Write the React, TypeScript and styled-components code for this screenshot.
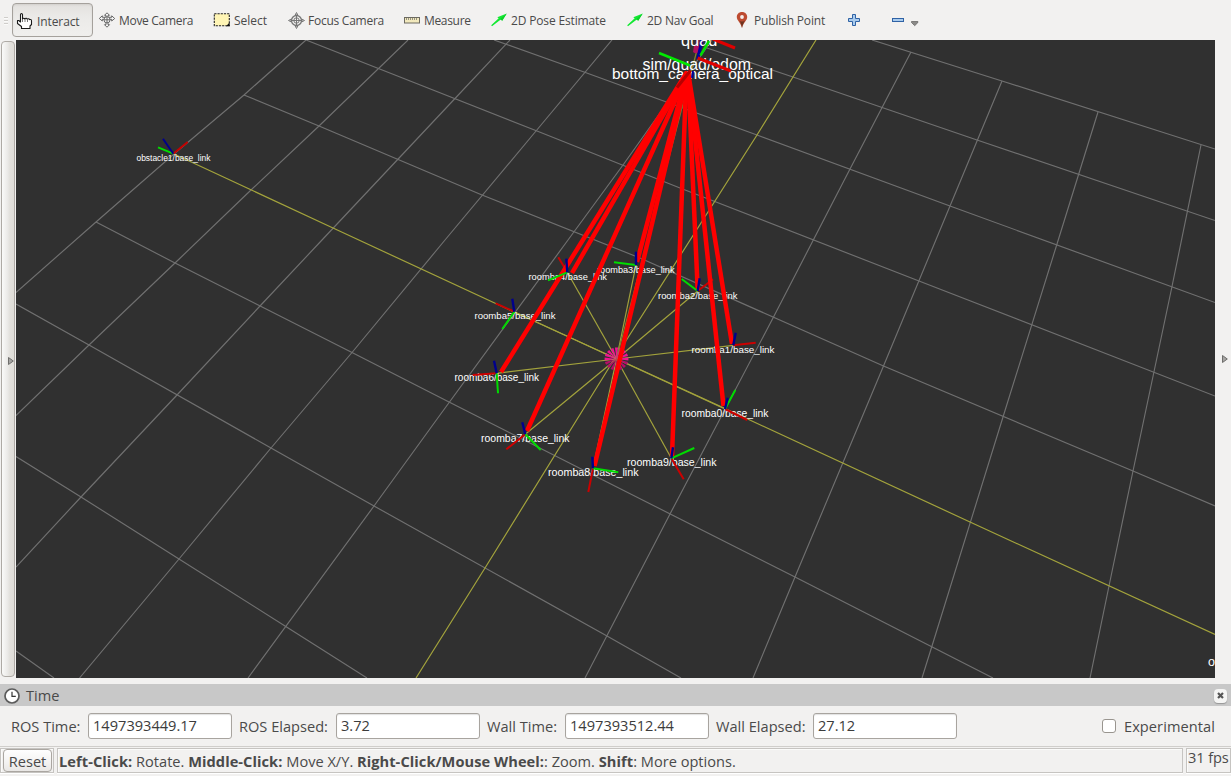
import React from 'react';
import styled, { createGlobalStyle } from 'styled-components';

const UI_FONT = '"Open Sans", "Noto Sans", sans-serif';

const GlobalStyle = createGlobalStyle`
  html, body { margin: 0; padding: 0; background: #f2f1f0; }
  * { box-sizing: border-box; }
`;

const Window = styled.div`
  width: 1231px;
  height: 776px;
  display: flex;
  flex-direction: column;
  overflow: hidden;
  background: #f2f1f0;
  color: #4a4a4a;
  font-family: ${UI_FONT};
  font-size: 14.6px;
  white-space: nowrap;
`;

/* ---------- Toolbar ---------- */

const Toolbar = styled.div`
  height: 40px;
  flex: none;
  display: flex;
  align-items: center;
  font-size: 12px;
`;

const Handle = styled.div`
  width: 4px;
  height: 8px;
  margin: 1px 4px 0;
  background: repeating-linear-gradient(to bottom, #cfcdca 0 1px, #fbfbfa 1px 2px, transparent 2px 3px);
`;

const ActiveTool = styled.button`
  width: 81px;
  height: 34px;
  margin-right: 6px;
  padding: 2px 0 0 3px;
  display: flex;
  align-items: center;
  gap: 4px;
  border: 1px solid #a5a19c;
  border-radius: 4px;
  background: linear-gradient(#e3e1de, #ebeae8 40%, #f0efed);
  box-shadow: inset 0 1px 2px rgba(0, 0, 0, 0.08);
  color: inherit;
  font: inherit;
`;

const Tool = styled.button<{ $width: number }>`
  width: ${(p) => p.$width}px;
  height: 34px;
  flex: none;
  padding: 0;
  display: flex;
  align-items: center;
  gap: 4px;
  border: 0;
  background: none;
  color: inherit;
  font: inherit;
`;

const ToolLabel = styled.span<{ $tracking?: number }>`
  letter-spacing: ${(p) => p.$tracking ?? 0}px;
`;

const Glyph = styled.svg`
  flex: none;
  overflow: visible;
`;

/* ---------- Middle area ---------- */

const Middle = styled.div`
  height: 638px;
  flex: none;
  display: flex;
`;

const LeftStrip = styled.div`
  width: 16px;
  padding: 1px 1px 0 1px;
`;

const CollapseButton = styled.div`
  height: 636px;
  display: flex;
  align-items: center;
  justify-content: flex-end;
  padding: 3px 0 0 0;
  border: 1px solid #aeaaa5;
  border-radius: 4px;
  background: linear-gradient(to right, #fafaf9, #ebeae8 45%, #e2e0dc 65%, #dfddd8);
`;

const RightStrip = styled.div`
  width: 16px;
  display: flex;
  align-items: center;
  justify-content: flex-end;
  padding-right: 3px;
`;

const Scene = styled.svg`
  display: block;
  width: 1199px;
  height: 638px;
  background: #303030;
  font-family: "Liberation Sans", Arial, sans-serif;
`;

/* ---------- Time panel ---------- */

const TitleBar = styled.div`
  height: 22px;
  margin-top: 6px;
  flex: none;
  display: flex;
  align-items: center;
  padding: 1px 4px 0;
  background: #c8c8c8;
`;

const Title = styled.span`
  margin: -2px 0 0 6px;
  flex: 1;
`;

const CloseButton = styled.div`
  width: 13px;
  height: 14px;
  display: flex;
  align-items: center;
  justify-content: center;
  border-radius: 4px;
  background: #f5f5f4;
  box-shadow: 0 1px 1px rgba(0, 0, 0, 0.25);
`;

const TimeRow = styled.div`
  height: 40px;
  flex: none;
  display: flex;
  align-items: center;
  padding-left: 11px;
`;

const FieldLabel = styled.label<{ $width: number }>`
  width: ${(p) => p.$width}px;
  flex: none;
`;

const Field = styled.div`
  width: 144px;
  height: 26px;
  margin-right: 7px;
  flex: none;
  padding-left: 4px;
  line-height: 23px;
  border: 1px solid #a8a49f;
  border-radius: 3px;
  background: #fff;
  box-shadow: inset 0 1px 1px rgba(0, 0, 0, 0.12);
  color: #3c3c3c;
`;

const Checkbox = styled.div`
  width: 14px;
  height: 14px;
  margin: 0 8px 0 auto;
  border: 1px solid #99958f;
  border-radius: 3px;
  background: #fff;
`;

const CheckLabel = styled.span`
  width: 92px;
  margin-right: 15px;
  letter-spacing: 0.06px;
`;

/* ---------- Status bar ---------- */

const StatusBar = styled.div`
  height: 30px;
  flex: none;
  display: flex;
  gap: 3px;
  padding: 1px 0 3px;
  border-top: 1px solid #d0cecb;
`;

const Inset = styled.div<{ $width: number }>`
  width: ${(p) => p.$width}px;
  flex: none;
  display: flex;
  align-items: center;
  border: 1px solid #c6c4c1;
  box-shadow: inset 1px 1px 0 #fbfbfa, 0 1px 0 #fff;
`;

const ResetButton = styled.button`
  width: 49px;
  height: 23px;
  margin: 0 0 0 2px;
  padding: 0;
  border: 1px solid #aaa6a1;
  border-radius: 4px;
  background: linear-gradient(#fefefe, #f3f2f1 60%, #e9e7e5);
  color: #4a4a4a;
  font: 14.6px/20px ${UI_FONT};
`;

const Hint = styled.span`
  margin-left: 1px;

  b { letter-spacing: 0.07px; }
`;

const Fps = styled.span`
  margin: -8px 0 0 1px;
  letter-spacing: -0.1px;
`;

/* ---------- Icons ---------- */

const HandIcon = () => (
  <Glyph width="17" height="18" viewBox="0 0 17 18">
    <path
      d="M4.500 10V2.500Q5.500.5 6.500 2.500V7Q7.500 5.500 8.800 6.800Q10.200 5.600 11.300 7.200Q12.600 6 13.700 7.600Q15.500 7 15.500 9V12.500L14 14V16.500H5.500V14.500L1.500 11.500V8.500H2.800Z"
      fill="#fff" stroke="#1a1a1a" strokeWidth="1.100" strokeLinejoin="round"
    />
    <path d="M6.500 7V10M9 7V10M11.500 7.500V10" stroke="#555" strokeWidth=".8" />
  </Glyph>
);

const MoveIcon = () => (
  <Glyph width="16" height="16" viewBox="0 0 16 16" fill="none" stroke="#606060" strokeWidth=".95">
    <path d="M8 .8L10.500 3.300H9V5.500H7V3.300H5.500ZM8 15.200L10.500 12.700H9V10.500H7V12.700H5.500ZM.3 6.500L3.300 3.800V5.300H6V7.300H3.300V9ZM15.700 6.500L12.700 3.800V5.300H10V7.300H12.700V9Z" fill="#f8f8f8" />
    <circle cx="8" cy="7.800" r="3.100" fill="#f8f8f8" />
    <path d="M5 7.800H11M8 4.800V10.800" />
  </Glyph>
);

const SelectIcon = () => (
  <Glyph width="17" height="14" viewBox="-.5 0 17 14">
    <rect x=".8" y=".8" width="15" height="12" fill="#fff5b5" stroke="#222" strokeWidth="1.100" strokeDasharray="2.200 1" />
    <path d="M16 9.500V13.300H12.500Z" fill="#111" />
  </Glyph>
);

const FocusIcon = () => (
  <Glyph width="16" height="17" viewBox="0 0 16 17" fill="none" stroke="#777" strokeWidth="1">
    <circle cx="8.500" cy="8.500" r="5" strokeWidth="1.300" />
    <circle cx="8.500" cy="8.500" r="2.700" />
    <path d="M.5 8.500L3 7.200V9.800ZM16.500 8.500L14 7.200V9.800ZM8.500 .5L7.200 3H9.800ZM8.500 16.500L7.200 14H9.800Z" />
    <path d="M3 8.500H14M8.500 3V14" />
  </Glyph>
);

const RulerIcon = () => (
  <Glyph width="16" height="7" viewBox="0 0 16 7">
    <rect x=".5" y=".5" width="15" height="5.500" fill="#f2e9bd" stroke="#6c6a60" />
    <path d="M2.500 1V3M4.500 1V3M6.500 1V3M8.500 1V3M10.500 1V3M12.500 1V3" stroke="#8a8878" strokeWidth=".9" />
  </Glyph>
);

const ArrowIcon = () => (
  <Glyph width="16" height="14" viewBox="0 0 16 14">
    <path d="M15.800 .5L11.200 7.800L9.800 6.500L1 13.200L.2 12.200L7.700 5.200L6.300 4.200Z" fill="#12e832" />
    <path d="M15.500 .8L8.500 6.500L9.800 6.500L11.200 7.800Z" fill="#0fcf2a" />
  </Glyph>
);

const PinIcon = () => (
  <Glyph width="16" height="16" viewBox="0 0 16 16">
    <path d="M8 0C4.800 0 2.800 2.200 2.800 5C2.800 8.500 6.700 10.500 8 16C9.300 10.500 13.200 8.500 13.200 5C13.200 2.200 11.200 0 8 0Z" fill="#bd4b30" />
    <path d="M8 9.500C6.500 9.500 6 9 5 8C6.500 10 7.500 12.500 8 16C8.500 12.500 9.800 10 11.500 8C10 9 9.500 9.500 8 9.500Z" fill="#6b3420" />
    <circle cx="8" cy="5" r="1.900" fill="#f7efec" />
  </Glyph>
);

const PlusIcon = () => (
  <Glyph width="12" height="12" viewBox="0 0 12 12">
    <path d="M4.500 .5H7.500V4.500H11.500V7.500H7.500V11.500H4.500V7.500H.5V4.500H4.500Z" fill="#a9cbed" stroke="#2f62a5" />
  </Glyph>
);

const MinusIcon = () => (
  <Glyph width="12" height="4" viewBox="0 0 12 4">
    <rect x=".5" y=".5" width="11" height="3" fill="#a9cbed" stroke="#2f62a5" />
  </Glyph>
);

const DownIcon = () => (
  <Glyph width="8" height="14" viewBox="-3 0 8 14">
    <path d="M.5 8.500H6.900V9.500L3.700 12.700L.5 9.500Z" fill="#8b8a88" stroke="#6c6b69" strokeWidth=".8" />
  </Glyph>
);

const RightTriangle = () => (
  <Glyph width="6" height="8" viewBox="0 0 6 8">
    <path d="M.5 .5L5.300 4L.5 7.500Z" fill="#a5a4a2" stroke="#6f6e6c" />
  </Glyph>
);

const ClockIcon = () => (
  <Glyph width="16" height="16" viewBox="0 0 16 16">
    <circle cx="8" cy="8" r="7" fill="#fff" stroke="#5b5b5b" strokeWidth="1.700" />
    <path d="M8 3.800V8.300H11.800" fill="none" stroke="#333" strokeWidth="1.200" />
  </Glyph>
);

/* ---------- 3D scene ---------- */

type Pt = [number, number];

const gridLines: Pt[][] = [
  [[872, 40], [1002, 81], [1215, 149]],
  [[707, 48], [793, 77], [977, 140], [1215, 220.5]],
  [[494, 40], [584, 72], [757, 135], [950, 206], [1215, 302.5]],
  [[306, 40], [400, 77], [537, 131], [680, 188], [919, 281], [1215, 396]],
  [[244, 95], [319, 126], [482, 195], [640, 258], [883.5, 366], [1133, 471], [1215, 506]],
  [[96, 222], [175, 263], [352, 352.5], [449, 402], [595, 476], [795, 577], [993, 678]],
  [[16, 304], [89, 345], [271, 448], [374, 506], [607, 636], [681, 678]],
  [[16, 456.5], [81, 497], [179, 559], [285, 626], [367, 678]],
  [[16, 651], [54, 678]],
  [[306, 40], [244, 95], [174, 154], [96, 222], [16, 292.5]],
  [[408, 40], [319, 126], [251, 190], [175, 263], [89, 345], [16, 415.5]],
  [[510, 40], [455, 98.5], [322, 240], [260, 306], [177, 395], [81, 497], [16, 567]],
  [[612, 40], [536, 131], [445, 240], [352, 352.5], [271, 448], [179, 559], [79.5, 678]],
  [[712, 40], [623, 165], [568, 240], [440, 415], [374, 506], [248, 678]],
  [[911, 52], [850, 169], [773, 318], [670, 514], [585, 678]],
  [[1002, 81], [950, 206], [883.5, 366], [795, 577], [753, 678]],
  [[1098, 112], [1057, 244], [1003, 417], [932, 646], [922, 678]],
  [[1201, 145], [1172, 286.5], [1133, 471], [1109, 586], [1090, 678]],
];

const originLines: Pt[][] = [
  [[174, 154], [333, 228], [514, 312], [615, 358], [724, 408], [970, 522], [1215, 634.5]],
  [[816, 40], [757, 135], [615, 358], [485, 568], [416, 678]],
];

const CENTER: Pt = [616.5, 359];

interface Frame {
  name: string;
  at: Pt;
  x?: Pt;
  y?: Pt;
  z: Pt;
  label: [number, number, number];
}

// label: left edge, baseline, width
const frames: Frame[] = [
  { name: 'roomba0/base_link', at: [725, 409], x: [747.3, 420], y: [735.3, 390], z: [727.7, 397.7], label: [681.5, 417, 87] },
  { name: 'roomba1/base_link', at: [733.3, 345.3], x: [755.7, 342.7], z: [735.7, 332.7], label: [691.5, 353, 83] },
  { name: 'roomba2/base_link', at: [697.7, 291], x: [713, 279.3], y: [681.7, 279], z: [699.7, 278.3], label: [658, 299, 79.5] },
  { name: 'roomba3/base_link', at: [636, 265], y: [614, 262.3], z: [636, 251.7], label: [597, 272.5, 77.5] },
  { name: 'roomba4/base_link', at: [567.3, 272.3], x: [558.3, 257.3], y: [548, 280.3], z: [566.3, 258.7], label: [528.5, 279.7, 78.5] },
  { name: 'roomba5/base_link', at: [514.3, 311.7], x: [495.7, 303.3], y: [502.3, 329], z: [512.3, 298.7], label: [474.5, 319.3, 81] },
  { name: 'roomba6/base_link', at: [496.7, 373.3], x: [472.7, 375], y: [498, 393.3], z: [494, 360.7], label: [454.5, 380.5, 84.5] },
  { name: 'roomba7/base_link', at: [525.3, 434.3], x: [506.3, 449.3], y: [540.7, 450], z: [522.3, 422.3], label: [481, 441.5, 88.5] },
  { name: 'roomba8/base_link', at: [593, 468.3], x: [588.3, 492], y: [618.3, 472.3], z: [592.3, 456.7], label: [548, 476, 90.5] },
  { name: 'roomba9/base_link', at: [671.3, 458.3], x: [683.7, 479.3], y: [694.3, 448], z: [673, 447.3], label: [627, 466, 89.5] },
];

const rays: [number, number, number, number][] = [
  [687, 72, 501, 372], [688, 72, 572, 273], [688, 72, 527, 431], [687, 72, 637, 262], [688, 72, 594.5, 466],
  [686.5, 72, 672, 456], [688, 72, 697.7, 290], [688, 72, 723.5, 406], [688, 72, 732, 344],
];

const starAngles = Array.from({ length: 16 }, (_, i) => (i * Math.PI) / 8);

const Line = ({ a, b, color, width = 2 }: { a: Pt; b: Pt; color: string; width?: number }) => (
  <line x1={a[0]} y1={a[1]} x2={b[0]} y2={b[1]} stroke={color} strokeWidth={width} />
);

const SceneLabel = ({ x, y, w, size, children }: { x: number; y: number; w: number; size: number; children: string }) => (
  <text x={x} y={y} textLength={w} fontSize={size} fill="#fff" lengthAdjust="spacingAndGlyphs">{children}</text>
);

const points = (p: Pt[]) => p.map((q) => q.join(',')).join(' ');

const Viewport = () => (
  <Scene viewBox="16 40 1199 638">
    <g fill="none" stroke="#707070" strokeWidth="1.15">
      {gridLines.map((l, i) => <polyline key={i} points={points(l)} />)}
    </g>
    <g fill="none" stroke="#a3a33c" strokeWidth="1.2">
      {originLines.map((l, i) => <polyline key={i} points={points(l)} />)}
      {frames.map((f) => <line key={f.name} x1={CENTER[0]} y1={CENTER[1]} x2={f.at[0]} y2={f.at[1]} />)}
      <line x1={CENTER[0]} y1={CENTER[1]} x2="697" y2="50" stroke="#82822f" />
    </g>
    {starAngles.map((t) => (
      <path
        key={t}
        d={`M${CENTER[0]} ${CENTER[1]}L${CENTER[0] + 12 * Math.cos(t - 0.13)} ${CENTER[1] + 11.5 * Math.sin(t - 0.13)}L${CENTER[0] + 12 * Math.cos(t + 0.13)} ${CENTER[1] + 11.5 * Math.sin(t + 0.13)}Z`}
        fill={Math.sin(t) > 0.2 ? '#b50d68' : '#ee1590'}
      />
    ))}

    <path d="M694 46H699.5L699 52Q696 54.5 693 52Z" fill="#b3125f" />
    <path d="M696 40H700L699 47H695Z" fill="#b3125f" opacity=".5" />
    <Line a={[702, 40]} b={[697.7, 59]} color="#0000a0" width={3} />

    <SceneLabel x={681} y={46.2} w={36.5} size={16.2}>quad</SceneLabel>
    <SceneLabel x={642.5} y={69.7} w={108.5} size={15.8}>sim/quad/odom</SceneLabel>
    <SceneLabel x={612} y={79} w={161} size={15.4}>bottom_camera_optical</SceneLabel>
    <SceneLabel x={136.5} y={160.5} w={74} size={8.4}>obstacle1/base_link</SceneLabel>
    <SceneLabel x={1208} y={665.5} w={7} size={12}>o</SceneLabel>
    {frames.map((f) => (
      <SceneLabel key={f.name} x={f.label[0]} y={f.label[1]} w={f.label[2]} size={f.label[2] / 8.45}>{f.name}</SceneLabel>
    ))}

    <Line a={[709, 41]} b={[700.5, 55.5]} color="#00e000" width={2.5} />
    <Line a={[659, 53]} b={[690, 65.5]} color="#00e800" width={2.5} />
    <Line a={[713, 39]} b={[735, 48]} color="#e00000" width={3} />
    <Line a={[697.7, 58]} b={[731, 71]} color="#e00000" width={3} />
    <Line a={[693, 71]} b={[692, 78]} color="#0000a0" width={2} />

    {frames.map((f) => f.x && <Line key={f.name} a={f.at} b={f.x} color="#cc0000" width={2} />)}
    {rays.map((r, i) => (
      <line key={i} x1={r[0]} y1={r[1]} x2={r[2]} y2={r[3]} stroke="#f00" strokeWidth="4.5" />
    ))}
    <Line a={[690.5, 70.5]} b={[677, 87.5]} color="#b80000" width={3} />
    {frames.map((f) => (
      <g key={f.name}>
        {f.y && <Line a={f.at} b={f.y} color="#00dc00" width={2} />}
        <Line a={f.at} b={f.z} color="#00008c" width={2.4} />
      </g>
    ))}
    <Line a={[173.3, 153.7]} b={[187.7, 142]} color="#c40000" width={2} />
    <Line a={[173.3, 153.7]} b={[158, 147.3]} color="#00dc00" width={1.8} />
    <Line a={[173.3, 153.7]} b={[163, 138.7]} color="#00008c" width={2} />
  </Scene>
);

export default function App() {
  return (
    <Window>
      <GlobalStyle />
      <Toolbar>
        <Handle />
        <ActiveTool><HandIcon /><ToolLabel $tracking={-0.1}>Interact</ToolLabel></ActiveTool>
        <Tool $width={114}><MoveIcon /><ToolLabel $tracking={-0.3}>Move Camera</ToolLabel></Tool>
        <Tool $width={75}><SelectIcon /><ToolLabel>Select</ToolLabel></Tool>
        <Tool $width={116}><FocusIcon /><ToolLabel $tracking={-0.25}>Focus Camera</ToolLabel></Tool>
        <Tool $width={87}><RulerIcon /><ToolLabel $tracking={-0.33}>Measure</ToolLabel></Tool>
        <Tool $width={136}><ArrowIcon /><ToolLabel $tracking={-0.15}>2D Pose Estimate</ToolLabel></Tool>
        <Tool $width={107}><ArrowIcon /><ToolLabel $tracking={-0.25}>2D Nav Goal</ToolLabel></Tool>
        <Tool $width={114}><PinIcon /><ToolLabel $tracking={-0.17}>Publish Point</ToolLabel></Tool>
        <Tool $width={44}><PlusIcon /></Tool>
        <Tool $width={30}><MinusIcon /><DownIcon /></Tool>
      </Toolbar>

      <Middle>
        <LeftStrip><CollapseButton><RightTriangle /></CollapseButton></LeftStrip>
        <Viewport />
        <RightStrip><RightTriangle /></RightStrip>
      </Middle>

      <TitleBar>
        <ClockIcon />
        <Title>Time</Title>
        <CloseButton>
          <Glyph width="7" height="7" viewBox="0 0 7 7"><path d="M1 1L6 6M6 1L1 6" stroke="#555" strokeWidth="2.200" /></Glyph>
        </CloseButton>
      </TitleBar>
      <TimeRow>
        <FieldLabel $width={77}>ROS Time:</FieldLabel><Field>1497393449.17</Field>
        <FieldLabel $width={97}>ROS Elapsed:</FieldLabel><Field>3.72</Field>
        <FieldLabel $width={78}>Wall Time:</FieldLabel><Field>1497393512.44</Field>
        <FieldLabel $width={97}>Wall Elapsed:</FieldLabel><Field>27.12</Field>
        <Checkbox /><CheckLabel>Experimental</CheckLabel>
      </TimeRow>
      <StatusBar>
        <Inset $width={54}><ResetButton>Reset</ResetButton></Inset>
        <Inset $width={1126}>
          <Hint>
            <b>Left-Click:</b> Rotate. <b>Middle-Click:</b> Move X/Y. <b>Right-Click/Mouse Wheel:</b>: Zoom. <b>Shift</b>: More options.
          </Hint>
        </Inset>
        <Inset $width={45}><Fps>31 fps</Fps></Inset>
      </StatusBar>
    </Window>
  );
}
